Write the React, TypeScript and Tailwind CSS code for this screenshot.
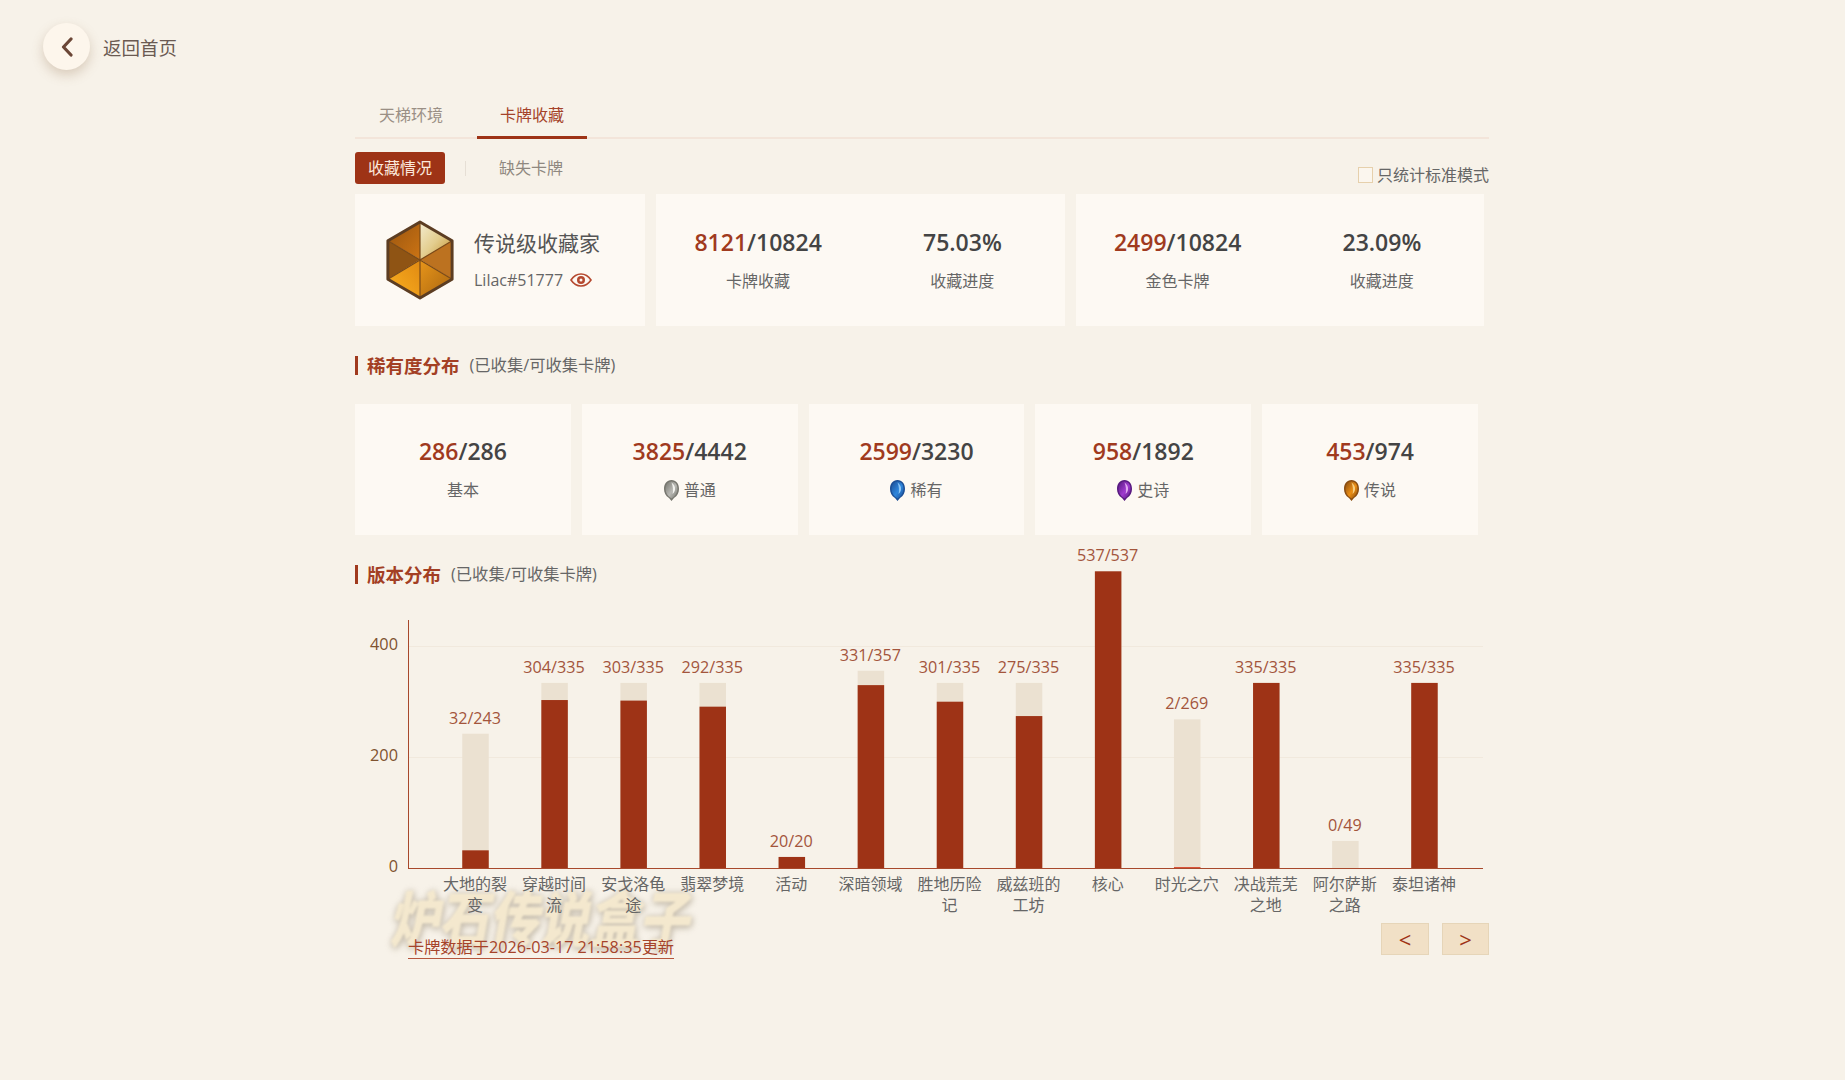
import React from "react";

const FONT = "font-['Open_Sans','Noto_Sans_CJK_SC',sans-serif]";

const bars = [
  { name: ["大地的裂", "变"], have: 32, total: 243 },
  { name: ["穿越时间", "流"], have: 304, total: 335 },
  { name: ["安戈洛龟", "途"], have: 303, total: 335 },
  { name: ["翡翠梦境"], have: 292, total: 335 },
  { name: ["活动"], have: 20, total: 20 },
  { name: ["深暗领域"], have: 331, total: 357 },
  { name: ["胜地历险", "记"], have: 301, total: 335 },
  { name: ["威兹班的", "工坊"], have: 275, total: 335 },
  { name: ["核心"], have: 537, total: 537 },
  { name: ["时光之穴"], have: 2, total: 269 },
  { name: ["决战荒芜", "之地"], have: 335, total: 335 },
  { name: ["阿尔萨斯", "之路"], have: 0, total: 49 },
  { name: ["泰坦诸神"], have: 335, total: 335 },
];

function Hexagon() {
  return (
    <svg width="72" height="80" viewBox="0 0 71 81" className="shrink-0">
      <defs>
        <linearGradient id="hexA" x1="0" y1="0" x2="1" y2="1">
          <stop offset="0" stopColor="#f4ecd0" />
          <stop offset="0.5" stopColor="#e3cd8e" />
          <stop offset="1" stopColor="#c2902c" />
        </linearGradient>
        <linearGradient id="hexB" x1="0" y1="1" x2="1" y2="0">
          <stop offset="0" stopColor="#fbb020" />
          <stop offset="1" stopColor="#e08a12" />
        </linearGradient>
        <linearGradient id="hexC" x1="0" y1="0" x2="1" y2="1">
          <stop offset="0" stopColor="#e8961a" />
          <stop offset="1" stopColor="#a86410" />
        </linearGradient>
        <linearGradient id="hexD" x1="1" y1="1" x2="0" y2="0">
          <stop offset="0" stopColor="#cc7414" />
          <stop offset="1" stopColor="#98540f" />
        </linearGradient>
      </defs>
      <polygon points="35.5,40 35.5,2 3,21" fill="url(#hexD)" />
      <polygon points="35.5,40 35.5,2 68,21" fill="url(#hexA)" />
      <polygon points="35.5,40 68,21 68,60" fill="#bc7220" />
      <polygon points="35.5,40 68,60 35.5,79" fill="url(#hexC)" />
      <polygon points="35.5,40 35.5,79 3,60" fill="url(#hexB)" />
      <polygon points="35.5,40 3,60 3,21" fill="#8f5414" />
      <path d="M35.5 2V79M3 21L68 60M3 60L68 21" stroke="#7a4a18" strokeWidth="1.2" fill="none" />
      <polygon points="35.5,2 68,21 68,60 35.5,79 3,60 3,21" fill="none" stroke="#5c3d22" strokeWidth="3" strokeLinejoin="round" />
    </svg>
  );
}

function Gem({ id, light, mid, dark }: { id: string; light: string; mid: string; dark: string }) {
  return (
    <svg width="15" height="21" viewBox="0 0 15 21" className="shrink-0">
      <defs>
        <linearGradient id={id} x1="0" y1="0" x2="1" y2="1">
          <stop offset="0" stopColor={dark} />
          <stop offset="0.55" stopColor={mid} />
          <stop offset="1" stopColor={dark} />
        </linearGradient>
      </defs>
      <path d="M7.5 21L5 18C1.5 16 0 12.5 0 9C0 3.5 3 0 7.5 0C12 0 15 3.5 15 9C15 12.5 13.5 16 10 18Z" fill={dark} />
      <path d="M7.5 18.5C3.5 16 1.5 12.5 1.5 9C1.5 4.5 4 1.5 7.5 1.5C11 1.5 13.5 4.5 13.5 9C13.5 12.5 11.5 16 7.5 18.5Z" fill={`url(#${id})`} />
      <path d="M7.5 2.5C10 4 11.5 7 11 10C10.5 12 9.5 13 8.5 14C9.5 10.5 9 6 7.5 2.5Z" fill={light} />
    </svg>
  );
}

function Stat({ red, rest, label }: { red?: string; rest: string; label: React.ReactNode }) {
  return (
    <div className="-mt-[2px] flex flex-1 flex-col items-center">
      <div className="text-[23px] leading-[32px] font-semibold text-[#444444]">
        {red && <span className="text-[#a03a1e]">{red}</span>}
        {rest}
      </div>
      <div className="mt-[11px] flex h-[24px] items-center gap-[5px] text-[16px] leading-[24px] text-[#666666]">{label}</div>
    </div>
  );
}

function SectionTitle({ title, note }: { title: string; note: string }) {
  return (
    <div className="flex h-[19px] items-center border-l-[3px] border-[#a03a1e] pl-[9px]">
      <span className="-mt-[1px] text-[18.5px] leading-[19px] font-bold text-[#a33f24]">{title}</span>
      <span className="ml-[10px] text-[16.3px] leading-[19px] text-[#666666]">{note}</span>
    </div>
  );
}

function Chart() {
  return (
    <svg width="1134" height="323" viewBox="0 0 1134 323" className="relative block overflow-visible">
      <line x1="53" y1="46.5" x2="1128" y2="46.5" stroke="#f1e9dd" />
      <line x1="53" y1="157.5" x2="1128" y2="157.5" stroke="#f1e9dd" />
      <line x1="53" y1="268.5" x2="1128" y2="268.5" stroke="#a8492c" />
      <line x1="53.5" y1="20" x2="53.5" y2="269" stroke="#a8492c" />
      {[
        ["400", 50],
        ["200", 161],
        ["0", 272],
      ].map(([t, y]) => (
        <text key={t} x="43" y={y} textAnchor="end" fontSize="16.3" fill="#7f5330">
          {t}
        </text>
      ))}
      {bars.map((b, i) => {
        const cx = 120.5 + i * 79.08;
        const topTotal = 268 - b.total * 0.5525;
        const topHave = 268 - b.have * 0.5525;
        return (
          <g key={i}>
            <rect x={cx - 13.25} y={topTotal} width="26.5" height={268 - topTotal} fill="#ebe1d1" />
            {b.have > 5 && <rect x={cx - 13.25} y={topHave} width="26.5" height={268 - topHave} fill="#9e3316" />}
            {b.have > 0 && b.have <= 5 && <rect x={cx - 13.25} y={267} width="26.5" height="1" fill="#d9533a" />}
            <text x={cx - 0.5} y={topTotal - 10} textAnchor="middle" fontSize="16.2" fill="#a3553c">
              {b.have}/{b.total}
            </text>
            {b.name.map((n, k) => (
              <text key={n} x={cx - 0.5} y={290 + k * 21} textAnchor="middle" fontSize="16" fill="#666666">
                {n}
              </text>
            ))}
          </g>
        );
      })}
    </svg>
  );
}

export default function App() {
  return (
    <div className={`${FONT} min-h-[1080px] bg-[#f7f2e9] pt-[23px] pb-[126px]`}>
      <div className="ml-[43px] flex items-center gap-[13px]">
        <div className="flex h-[47px] w-[47px] items-center justify-center rounded-full bg-[#fdf6ec] shadow-[0_5px_12px_rgba(140,105,70,0.28)]">
          <svg width="14" height="20" viewBox="0 0 14 20" fill="none">
            <path d="M11 2L3.5 10L11 18" stroke="#6b4636" strokeWidth="3.2" strokeLinecap="round" strokeLinejoin="round" />
          </svg>
        </div>
        <span className="pt-[2px] text-[18.5px] leading-[24px] text-[#6b5a52]">返回首页</span>
      </div>

      <main className="ml-[355px] w-[1134px]">
        <div className="mt-[24px] flex h-[45px] gap-[10px] border-b-2 border-[#f3e5da]">
          <div className="-mb-[2px] flex w-[112px] items-center justify-center pb-[4px] text-[16px] text-[#9a8f85]">天梯环境</div>
          <div className="-mb-[2px] flex w-[110px] items-center justify-center border-b-[3px] border-[#9e3316] pb-[1px] text-[16px] text-[#a5432a]">卡牌收藏</div>
        </div>

        <div className="mt-[13px] flex h-[42px] items-start justify-between">
          <div className="flex h-[32px] items-center">
            <div className="flex h-[32px] w-[90px] items-center justify-center rounded-[3px] bg-[#9e3316] text-[16px] text-[#fbe9dc]">收藏情况</div>
            <div className="ml-[20px] h-[15px] w-px bg-[#e6dfd5]" />
            <div className="ml-[33px] text-[16px] text-[#8f8880]">缺失卡牌</div>
          </div>
          <div className="mt-[13px] flex items-center gap-[4px]">
            <div className="h-[16px] w-[15px] border border-[#e6d0ac] bg-[#fbf6ee]" />
            <span className="text-[16px] leading-[20px] text-[#666666]">只统计标准模式</span>
          </div>
        </div>

        <div className="flex w-[1129px] gap-[11px]">
          <div className="flex h-[132px] w-[290px] items-center bg-[#fdf9f3] pl-[29px]">
            <Hexagon />
            <div className="ml-[18px]">
              <div className="text-[21px] leading-[28px] text-[#555555]">传说级收藏家</div>
              <div className="mt-[11px] flex items-center gap-[7px] text-[16px] leading-[24px] text-[#666666]">
                Lilac#51777
                <svg width="22" height="14" viewBox="0 0 22 14" fill="none">
                  <path d="M1 7C4 2.5 7.5 1 11 1C14.5 1 18 2.5 21 7C18 11.5 14.5 13 11 13C7.5 13 4 11.5 1 7Z" stroke="#b5492f" strokeWidth="1.6" />
                  <circle cx="11" cy="7" r="4" fill="#b5492f" />
                  <circle cx="11" cy="7" r="1.5" fill="#fdf9f3" />
                </svg>
              </div>
            </div>
          </div>
          <div className="flex h-[132px] flex-1 items-center bg-[#fdf9f3]">
            <Stat red="8121" rest="/10824" label="卡牌收藏" />
            <Stat rest="75.03%" label="收藏进度" />
          </div>
          <div className="flex h-[132px] flex-1 items-center bg-[#fdf9f3]">
            <Stat red="2499" rest="/10824" label="金色卡牌" />
            <Stat rest="23.09%" label="收藏进度" />
          </div>
        </div>

        <div className="mt-[30px]">
          <SectionTitle title="稀有度分布" note="(已收集/可收集卡牌)" />
        </div>

        <div className="mt-[29px] grid w-[1123px] grid-cols-5 gap-[11px]">
          {[
            { red: "286", rest: "/286", label: <>基本</> },
            { red: "3825", rest: "/4442", label: <><Gem id="g1" light="#f2f2ee" mid="#b9b9b4" dark="#77776f" />普通</> },
            { red: "2599", rest: "/3230", label: <><Gem id="g2" light="#8cc6f5" mid="#2f86dc" dark="#1c4f96" />稀有</> },
            { red: "958", rest: "/1892", label: <><Gem id="g3" light="#e0a8f0" mid="#a03ad0" dark="#581a80" />史诗</> },
            { red: "453", rest: "/974", label: <><Gem id="g4" light="#f8cf80" mid="#ec8f14" dark="#8a4d10" />传说</> },
          ].map((c) => (
            <div key={c.red} className="flex h-[131px] items-center bg-[#fdf9f3]">
              <Stat red={c.red} rest={c.rest} label={c.label} />
            </div>
          ))}
        </div>

        <div className="mt-[30px]">
          <SectionTitle title="版本分布" note="(已收集/可收集卡牌)" />
        </div>

        <div className="relative mt-[16px]">
          <div className="pointer-events-none absolute top-[284px] left-[38px] origin-center scale-y-[1.2] skew-x-[-12deg] text-[50px] leading-[70px] font-black whitespace-nowrap text-[#f3e3bd] opacity-60 blur-[1px] [text-shadow:0_0_6px_#a89c88,2px_3px_6px_#b0a591]">
            炉石传说盒子
          </div>
          <Chart />
          <div className="relative flex items-start justify-between">
            <div className="mt-[13px] ml-[53px] border-b border-[#b4553c] text-[16.2px] leading-[22px] whitespace-nowrap text-[#a5432a]">
              卡牌数据于2026-03-17 21:58:35更新
            </div>
            <div className="flex gap-[13px]">
              <div className="flex h-[32px] w-[48px] items-center justify-center border border-[#e6d5b8] bg-[#f1e0c6] text-[22px] text-[#9e3316]">&lt;</div>
              <div className="flex h-[32px] w-[47px] items-center justify-center border border-[#e6d5b8] bg-[#f1e0c6] text-[22px] text-[#9e3316]">&gt;</div>
            </div>
          </div>
        </div>
      </main>
    </div>
  );
}
